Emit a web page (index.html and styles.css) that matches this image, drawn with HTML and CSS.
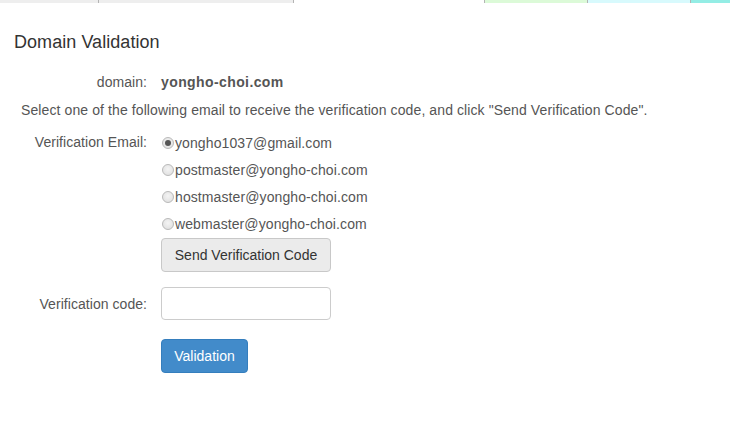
FILE: index.html
```html
<!DOCTYPE html>
<html>
<head>
<meta charset="utf-8">
<link rel="stylesheet" href="styles.css">
</head>
<body>
<div class="strip">
  <div class="seg seg-gray1"></div>
  <div class="seg seg-gray2"></div>
  <div class="seg seg-white"></div>
  <div class="seg seg-green"></div>
  <div class="seg seg-cyan"></div>
  <div class="seg seg-teal"></div>
</div>
<div class="page">
  <h3 class="title">Domain Validation</h3>
  <div class="row row-domain">
    <div class="label">domain:</div>
    <div class="value">yongho-choi.com</div>
  </div>
  <p class="note">Select one of the following email to receive the verification code, and click "Send Verification Code".</p>
  <div class="row row-email">
    <div class="label label-email">Verification Email:</div>
    <div class="control">
      <label class="radio"><input type="radio" name="em" checked><span>yongho1037@gmail.com</span></label>
      <label class="radio"><input type="radio" name="em"><span>postmaster@yongho-choi.com</span></label>
      <label class="radio"><input type="radio" name="em"><span>hostmaster@yongho-choi.com</span></label>
      <label class="radio"><input type="radio" name="em"><span>webmaster@yongho-choi.com</span></label>
      <button class="btn btn-default" type="button">Send Verification Code</button>
    </div>
  </div>
  <div class="row row-code">
    <div class="label">Verification code:</div>
    <div class="control"><input class="input" type="text"></div>
  </div>
  <div class="row row-submit">
    <div class="label"></div>
    <div class="control"><button class="btn btn-primary" type="button">Validation</button></div>
  </div>
</div>
</body>
</html>
```

FILE: styles.css
```css
html, body {
  margin: 0;
  padding: 0;
  background: #fff;
}
body {
  font-family: "Liberation Sans", Arial, sans-serif;
  font-size: 14px;
  color: #555;
}
.strip {
  display: flex;
  height: 3px;
}
.seg {
  box-sizing: border-box;
  border-right: 1px solid #b4b4b4;
  height: 3px;
}
.seg-gray1 { width: 99px; background: #eeeeee; }
.seg-gray2 { width: 195px; background: #eeeeee; }
.seg-white { width: 191px; background: #ffffff; }
.seg-green { width: 103px; background: #dcfad8; }
.seg-cyan { width: 103px; background: #d8fafd; }
.seg-teal { flex: 1; background: #94ede5; border-right: none; }

.page {
  padding: 0 14px;
}
.title {
  margin: 29px 0 0;
  font-size: 18px;
  font-weight: normal;
  line-height: 20px;
  color: #333;
  letter-spacing: 0.05px;
}
.row {
  display: grid;
  grid-template-columns: 133px 1fr;
  column-gap: 14px;
}
.label {
  text-align: right;
  line-height: 20px;
  letter-spacing: 0.05px;
}
.row-domain {
  margin-top: 20px;
}
.value {
  font-weight: bold;
  line-height: 20px;
  letter-spacing: 0.4px;
}
.note {
  margin: 8px 0 0;
  padding-left: 7px;
  line-height: 20px;
  letter-spacing: 0.1px;
}
.row-email {
  margin-top: 9px;
}
.label-email {
  line-height: 27px;
}
.control {
  display: flex;
  flex-direction: column;
  align-items: flex-start;
}
.radio {
  display: flex;
  align-items: center;
  height: 27px;
  letter-spacing: 0.1px;
}
.radio input {
  appearance: none;
  -webkit-appearance: none;
  margin: 0 1px 0 1px;
  width: 12px;
  height: 12px;
  box-sizing: border-box;
  border-radius: 50%;
  border: 1px solid #b9b9b9;
  background: radial-gradient(circle at 50% 40%, #f4f4f4 0%, #dcdcdc 100%);
  position: relative;
}
.radio input:checked::after {
  content: "";
  position: absolute;
  left: 2px;
  top: 2px;
  width: 6px;
  height: 6px;
  border-radius: 50%;
  background: #555;
}
.btn {
  font-family: "Liberation Sans", Arial, sans-serif;
  font-size: 14px;
  line-height: 20px;
  height: 34px;
  padding: 6px 12px;
  border-radius: 4px;
  box-sizing: border-box;
  cursor: pointer;
}
.btn-default {
  margin-top: 1px;
  width: 170px;
  background: #ebebeb;
  border: 1px solid #c8c8c8;
  color: #333;
}
.row-code {
  margin-top: 15px;
  align-items: center;
}
.input {
  width: 170px;
  height: 33px;
  box-sizing: border-box;
  border: 1px solid #ccc;
  border-radius: 4px;
  background: #fff;
  padding: 6px 12px;
  font-family: "Liberation Sans", Arial, sans-serif;
  font-size: 14px;
}
.row-submit {
  margin-top: 19px;
}
.btn-primary {
  width: 87px;
  background: #428bca;
  border: 1px solid #357ebd;
  color: #fff;
}
```
